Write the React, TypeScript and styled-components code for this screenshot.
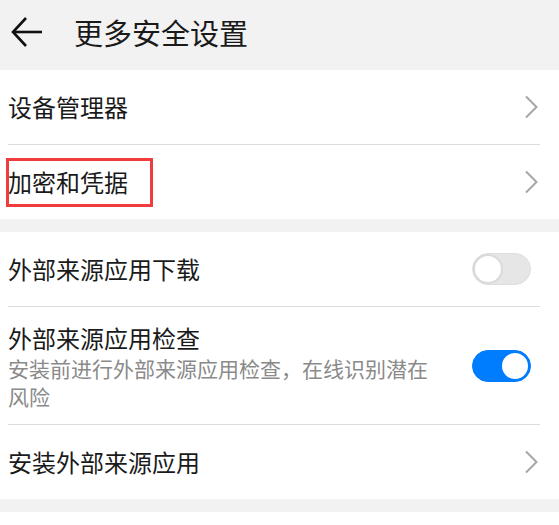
import React from "react";
import styled, { createGlobalStyle } from "styled-components";

const Global = createGlobalStyle`
  html, body { margin: 0; padding: 0; background: #ffffff; }
  body { font-family: "Noto Sans CJK SC", "Noto Sans", sans-serif; -webkit-font-smoothing: antialiased; }
`;

const Page = styled.div`
  width: 559px;
  display: flex;
  flex-direction: column;
  background: #ffffff;
`;

const Header = styled.header`
  height: 70px;
  background: #f2f2f2;
  display: flex;
  align-items: center;
  padding-left: 11px;
  box-sizing: border-box;
`;

const BackButton = styled.div`
  width: 32px;
  height: 32px;
  display: flex;
  align-items: center;
  justify-content: center;
  margin-right: 31px;
  margin-top: -6px;
`;

const Title = styled.h1`
  margin: 0;
  font-size: 29px;
  font-weight: 400;
  color: #1a1a1a;
  line-height: 1;
  margin-top: -6px;
`;

const Group = styled.section`
  background: #ffffff;
  display: flex;
  flex-direction: column;
`;

const Gap = styled.div<{ $h: number }>`
  height: ${(p) => p.$h}px;
  background: #f2f2f2;
`;

const Row = styled.div`
  padding-left: 8px;
  position: relative;
`;

const RowInner = styled.div<{ $last?: boolean; $h?: number }>`
  margin-right: 19px;
  min-height: ${(p) => p.$h ?? 74}px;
  display: flex;
  align-items: center;
  gap: 32px;
  padding-right: 9px;
  box-sizing: border-box;
  border-bottom: ${(p) => (p.$last ? "none" : "1px solid #dcdcdc")};
  position: relative;
`;

const TextCol = styled.div<{ $padded?: boolean }>`
  flex: 1;
  display: flex;
  flex-direction: column;
  padding: ${(p) => (p.$padded ? "15px 0 14px" : "0")};
`;

const Label = styled.div`
  font-size: 24px;
  line-height: 32px;
  color: #1a1a1a;
`;

const Sub = styled.div`
  font-size: 21px;
  line-height: 28px;
  color: #8a8a8a;
`;

const Chevron = styled.svg`
  width: 14px;
  height: 24px;
  margin-right: -7px;
  flex: none;
`;

const Toggle = styled.div<{ $on: boolean }>`
  width: 59px;
  height: 32px;
  border-radius: 16px;
  box-sizing: border-box;
  flex: none;
  display: flex;
  align-items: center;
  justify-content: ${(p) => (p.$on ? "flex-end" : "flex-start")};
  background: ${(p) => (p.$on ? "#007dff" : "#e6e6e6")};
  border: 1px solid ${(p) => (p.$on ? "#007dff" : "#dedede")};
  padding: 0;
`;

const Knob = styled.div<{ $on: boolean }>`
  width: 30px;
  height: 30px;
  border-radius: 50%;
  background: #ffffff;
  box-sizing: border-box;
  border: 2px solid ${(p) => (p.$on ? "#007dff" : "#d9d9d9")};
`;

const Highlight = styled.div`
  position: absolute;
  left: -2px;
  top: 13px;
  width: 147px;
  height: 49px;
  border: 3px solid #f03c3c;
  box-sizing: border-box;
  pointer-events: none;
`;

const ChevronIcon = () => (
  <Chevron viewBox="0 0 14 24">
    <polyline points="2,1.5 12.5,12 2,22.5" fill="none" stroke="#a6a6a6" strokeWidth="2" />
  </Chevron>
);

const Switch = ({ on }: { on: boolean }) => (
  <Toggle $on={on}>
    <Knob $on={on} />
  </Toggle>
);

export default function App() {
  return (
    <>
      <Global />
      <Page>
        <Header>
          <BackButton>
            <svg width="32" height="32" viewBox="0 0 32 32">
              <polyline points="15,2 2,16 15,30" fill="none" stroke="#111" strokeWidth="2.6" />
              <line x1="2.5" y1="16" x2="31" y2="16" stroke="#111" strokeWidth="2.6" />
            </svg>
          </BackButton>
          <Title>更多安全设置</Title>
        </Header>
        <Group>
          <Row>
            <RowInner $h={75}>
              <TextCol>
                <Label>设备管理器</Label>
              </TextCol>
              <ChevronIcon />
            </RowInner>
          </Row>
          <Row>
            <RowInner $last>
              <Highlight />
              <TextCol>
                <Label>加密和凭据</Label>
              </TextCol>
              <ChevronIcon />
            </RowInner>
          </Row>
        </Group>
        <Gap $h={13} />
        <Group>
          <Row>
            <RowInner $h={75}>
              <TextCol>
                <Label>外部来源应用下载</Label>
              </TextCol>
              <Switch on={false} />
            </RowInner>
          </Row>
          <Row>
            <RowInner $h={118}>
              <TextCol $padded>
                <Label>外部来源应用检查</Label>
                <Sub>安装前进行外部来源应用检查，在线识别潜在风险</Sub>
              </TextCol>
              <Switch on={true} />
            </RowInner>
          </Row>
          <Row>
            <RowInner $last>
              <TextCol>
                <Label>安装外部来源应用</Label>
              </TextCol>
              <ChevronIcon />
            </RowInner>
          </Row>
        </Group>
        <Gap $h={13} />
      </Page>
    </>
  );
}
